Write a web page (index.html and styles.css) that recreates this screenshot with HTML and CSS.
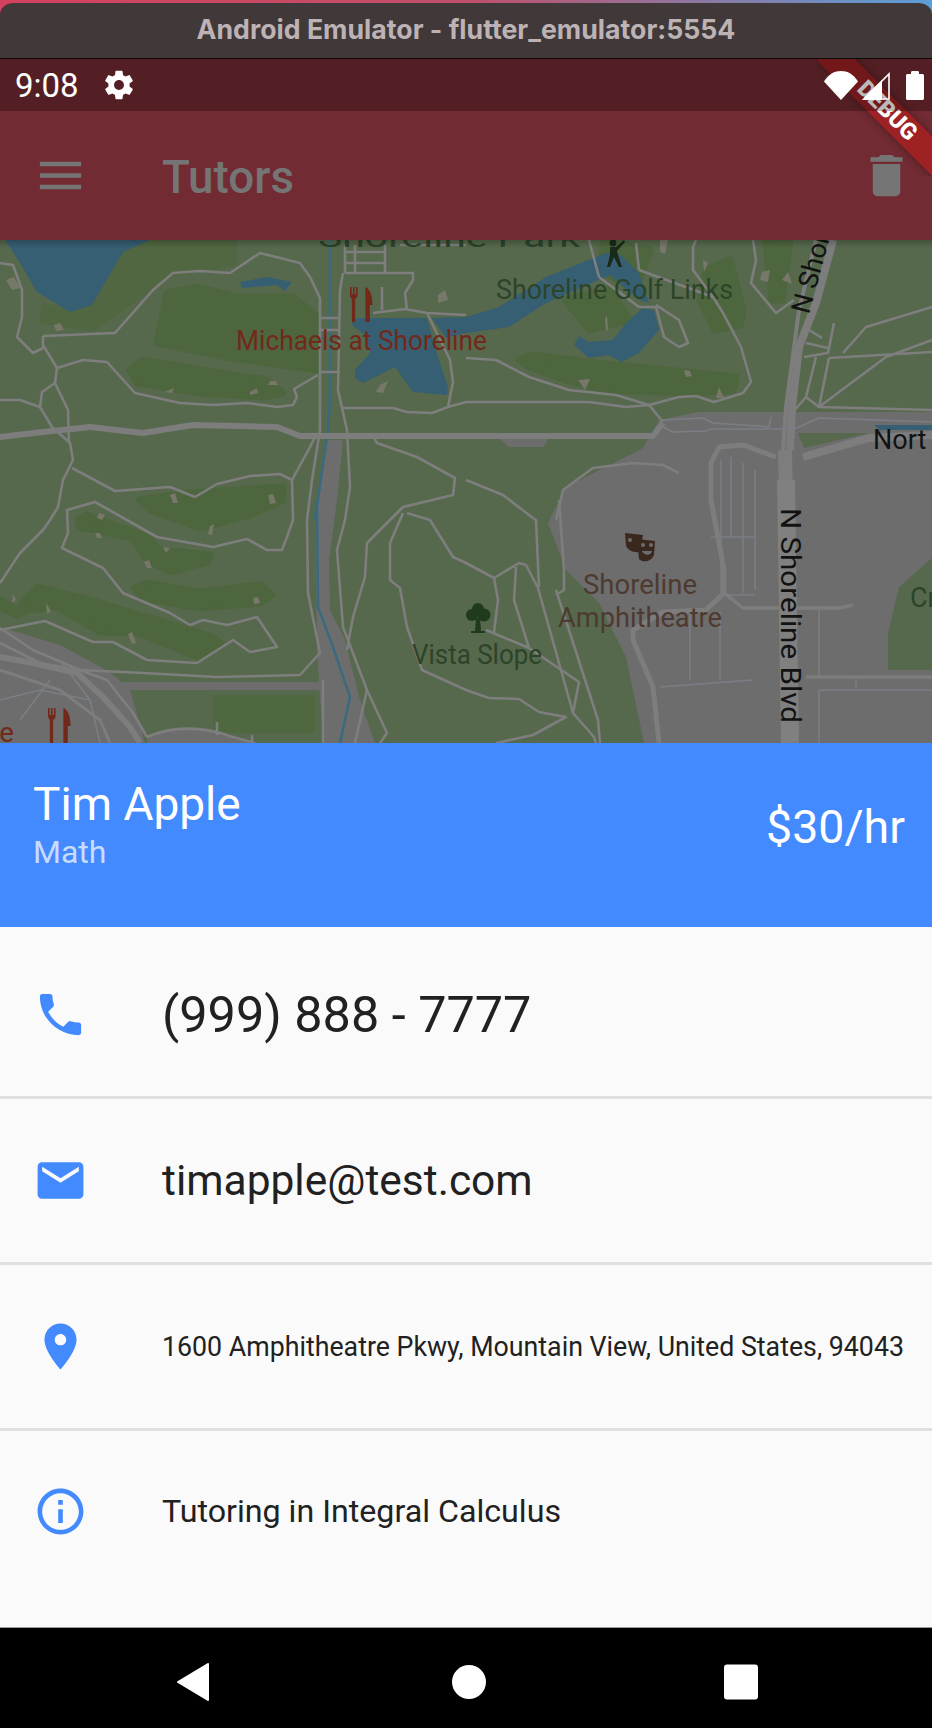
FILE: index.html

```html
<!DOCTYPE html>
<html lang="en">
<head>
  <meta charset="UTF-8" />
  <meta name="viewport" content="width=device-width, initial-scale=1.0"/>
  <title>Android Emulator - flutter_emulator:5554</title>
  <link rel="stylesheet" href="styles.css">
</head>
<body>
  <div class="window">
    <div class="titlebar">Android Emulator - flutter_emulator:5554</div>

    <div class="statusbar">
      <span class="time">9:08</span>
      <svg class="gear" viewBox="0 0 24 24"><path fill="#fff" d="M19.43 12.98c.04-.32.07-.64.07-.98s-.03-.66-.07-.98l2.11-1.65c.19-.15.24-.42.12-.64l-2-3.46c-.12-.22-.39-.3-.61-.22l-2.49 1c-.52-.4-1.08-.73-1.69-.98l-.38-2.65C14.46 2.18 14.25 2 14 2h-4c-.25 0-.46.18-.49.42l-.38 2.65c-.61.25-1.17.59-1.69.98l-2.49-1c-.23-.09-.49 0-.61.22l-2 3.46c-.13.22-.07.49.12.64l2.11 1.65c-.04.32-.07.65-.07.98s.03.66.07.98l-2.11 1.65c-.19.15-.24.42-.12.64l2 3.46c.12.22.39.3.61.22l2.49-1c.52.4 1.08.73 1.69.98l.38 2.65c.03.24.24.42.49.42h4c.25 0 .46-.18.49-.42l.38-2.65c.61-.25 1.17-.59 1.69-.98l2.49 1c.23.09.49 0 .61-.22l2-3.46c.12-.22.07-.49-.12-.64l-2.11-1.65zM12 15.5c-1.93 0-3.5-1.57-3.5-3.5s1.57-3.5 3.5-3.5 3.5 1.57 3.5 3.5-1.57 3.5-3.5 3.5z"/></svg>
      <span class="spacer"></span>
      <svg class="wifi" viewBox="0 0 34 29"><path fill="#fff" d="M0 10.500C4.500 3 10.500 0 17 0s12.500 3 17 10.500L17 29z"/></svg>
      <svg class="signal" viewBox="0 0 28 28"><path fill="none" stroke="#fff" stroke-width="1.600" d="M27 2v25H2z"/><path fill="#fff" d="M20 8v20H0z"/></svg>
      <svg class="battery" viewBox="0 0 18 30"><path fill="#fff" d="M5 2.500c0-.8.5-1.500 1.500-1.500h5c1 0 1.500.7 1.500 1.500V4h3.500c.8 0 1.500.7 1.500 1.500v23c0 .8-.7 1.500-1.500 1.500h-15C.7 30 0 29.300 0 28.500v-23C0 4.700.7 4 1.500 4H5z"/></svg>
    </div>

    <header class="appbar">
      <svg class="bar-icon" viewBox="0 0 24 24"><path fill="#757575" d="M3 18h18v-2H3v2zm0-5h18v-2H3v2zm0-7v2h18V6H3z"/></svg>
      <span class="appbar-title">Tutors</span>
      <svg class="bar-icon trash" viewBox="0 0 24 24"><path fill="#757575" d="M6 19c0 1.100.9 2 2 2h8c1.100 0 2-.9 2-2V7H6v12zM19 4h-3.500l-1-1h-5l-1 1H5v2h14V4z"/></svg>
    </header>

    <div class="map">
      <svg class="map-svg" viewBox="0 240 932 503" xmlns="http://www.w3.org/2000/svg">
        <defs>
          <g id="fork-knife">
            <path d="M0 0h1.500v7h1.200V0h1.500v7h1.200V0h1.500v8c0 2-1 3.200-2.200 3.800V35h-3V11.800C1 11.200 0 10 0 8zM14 35V0c3.500 1.500 6.500 7 6.500 18H18v17z" transform="scale(1.100 1)"/>
          </g>
        </defs>

        <rect x="0" y="240" width="932" height="503" fill="#56694c"/>

        <g class="map-soft">
          <!-- built up land -->
          <g fill="#6d6d6d">
            <path d="M659 420L699 412H932V743H644L626 657L599 603L566 570L548 523L566 487L643 448z"/>
            <path d="M0 627L60 645L110 672L130 690L145 743H0z"/>
            <path d="M327 440H343L337 500L329 560L330 610L345 640L360 700L375 743H323L317 650L316 560L318 500z"/>
            <path d="M147 737C170 725 200 725 233 737L258 743H147z"/>
            <path d="M108 682H320V690H127z"/>
            <path d="M499 438H549L543 447H509z"/>
          </g>
          <path fill="#56694c" d="M932 558L899 587L888 633V670H932z"/>
          <path fill="#56694c" d="M798 433H869L804 448z"/>

          <!-- fairways -->
          <g class="fairways" fill="#4e663e" stroke="#4e663e">
            <path class="fairway-pale" d="M43 320L45 307L70 312L92 305L123 252L150 240H233V263L170 273L93 328z"/>
            <path d="M157 343L167 293L197 287L237 297H293L317 317V370L227 357z"/>
            <path d="M130 370L143 360L200 370L267 380L283 393L263 397L200 393L137 383z"/>
            <path d="M140 500L187 493L283 487V500L250 515L200 528L150 510z"/>
            <path d="M78 520L87 515L147 537L160 550L210 555L207 562L170 572L147 560L133 538L80 527z"/>
            <path d="M135 588L147 583L200 592L260 585L272 595L260 603L200 608L143 598z"/>
            <path d="M0 600L17 610L37 587L100 603L213 637L220 643L200 658L140 633L100 632L57 607L27 610L17 615L0 607z"/>
            <path d="M519 360L533 355L586 362L666 370L736 377L733 390L693 393L606 390L566 380L529 367z"/>
            <path d="M706 270L730 260L743 310L740 325L715 330L700 300z"/>
            <path d="M766 240H790L782 300H772z"/>
            <path d="M604 240L650 250L636 290L600 270z"/>
            <path d="M565 300L610 290L630 320L590 330z"/>
          </g>
          <rect x="213" y="695" width="102" height="38" fill="#4f683f"/>

          <!-- water -->
          <g fill="#365f73">
            <path d="M5 240L20 263L37 292L70 312L92 305L123 252L150 240z"/>
            <path d="M240 282L267 277L292 282L285 291L277 285L242 288z"/>
            <path d="M352 325L353 318H427L438 357L448 387L447 395L413 392L395 367L363 383L355 378V370L370 353L365 335z"/>
            <path d="M432 318L466 317L499 307L546 277L606 253L621 255L639 273L649 303L639 300L610 275L559 297L543 305L509 327L466 333L446 338z"/>
            <path d="M579 336L574 345L589 358L609 355L621 362L639 353L659 330L654 310L643 308L626 323L613 340L589 342z"/>
            <path d="M874 425H932V430H880z"/>
          </g>
          <path fill="none" stroke="#3a6a80" stroke-width="2.500" d="M330 240V397L328 430L315 520L317 500L318 607L333 647L350 697L340 743"/>

          <!-- tan patches -->
          <g fill="#78786a">
            <path d="M6 280L14 277L20 288L12 290z"/><path d="M54 325L60 323L64 330L56 331z"/>
            <path d="M165 392L174 388L172 393z"/><path d="M250 392L257 388L258 393L250 395z"/>
            <path d="M270 381L276 381L278 385L268 385z"/><path d="M170 495L175 493L178 503L173 503z"/>
            <path d="M268 495L273 494L276 503L270 504z"/><path d="M99 513L105 515L102 520L97 518z"/>
            <path d="M95 533L100 533L102 538L97 538z"/><path d="M163 547L170 548L166 553z"/>
            <path d="M144 562L149 560L152 568L147 568z"/><path d="M210 526L214 524L212 535L208 534z"/>
            <path d="M253 598L258 597L260 603L254 604z"/><path d="M13 594L16 600L12 603z"/>
            <path d="M46 603L51 611L47 614z"/><path d="M128 634L132 632L136 643L132 644z"/>
            <path d="M380 385L388 381L383 393L376 392z"/><path d="M438 295L445 290L448 300L438 303z"/>
            <path d="M660 235L668 240L665 254L660 252z"/><path d="M703 260L708 263L704 272z"/>
            <path d="M762 272L770 270L768 282L760 280z"/><path d="M782 280L788 272L792 284z"/>
            <path d="M578 380L590 379L585 390L583 387z"/><path d="M684 370L690 371L692 376L686 377z"/>
            <path d="M716 398L719 387L724 398z"/><path d="M605 320L607 315L608 330L606 331z"/>
          </g>

          <!-- thin roads -->
          <g fill="none" stroke="#7e7e7e" stroke-width="2.600" stroke-linejoin="round">
            <path d="M43 336L115 333L153 290L173 273L200 271L230 273L260 253L300 263L310 277L320 298"/>
            <path d="M0 263L13 265L22 290V317L17 337L33 353L43 348V336"/>
            <path d="M43 345L57 368L83 360L107 362L135 393L180 403L213 405L247 403L277 407L293 405L297 397L294 389L318 375"/>
            <path d="M57 368L55 383L42 392L40 407L20 400L0 400"/>
            <path d="M40 407L52 427L70 443L73 460L63 480L58 507L50 520L43 530L20 553L0 583"/>
            <path d="M55 383L68 410L69 443"/>
            <path d="M72 468L115 491L170 487L195 497L217 484L250 476L280 474L292 480L293 520L287 537L282 550H267L247 539L213 547L157 537L95 502L67 510L68 533L62 548L103 568L123 593L170 613L190 625L203 620L227 625L257 617L277 647L250 652L233 640L197 663L147 660L113 642H93L45 621L0 630"/>
            <path d="M292 480L310 447L317 433"/>
            <path d="M0 628L33 650L80 670L143 673L217 677L300 675L320 653L308 593L307 520L312 480L320 430V298"/>
            <path d="M340 290L338 390L347 430L350 487L345 520L337 550L343 627L367 690L387 733L380 743"/>
            <path d="M367 690L355 743"/>
            <path d="M347 650L353 617L365 577L367 543L403 507L453 495L455 478L417 457L377 443L373 435"/>
            <path d="M403 513L390 543V580L400 588L407 627L422 670L466 690L489 698L519 699L539 712L566 717L533 735L496 743"/>
            <path d="M407 513L430 520L453 557L466 563L494 578L519 563L526 565L538 588L573 713L594 737L596 743"/>
            <path d="M494 578L498 600L494 632M486 630L529 648M516 567L514 600L529 648L579 682L573 713M556 590L598 720L600 743"/>
            <path d="M466 480L503 495L533 518L536 520L539 587M559 500L564 570V590L556 595"/>
            <path d="M343 273L340 290M345 252H385M345 263H385M345 273H413V280L405 293L407 310M345 245V273M355 245V273M385 245V273M382 287V310M400 245H466"/>
            <path d="M320 318H340M320 330H340M320 372H340"/>
            <path d="M373 313L405 309L427 313L466 315M427 313L450 360L453 382L448 407L432 413L407 412L393 408L343 408M448 407L466 402H589L626 407L649 405L679 397L696 396L714 402L743 393L751 382L741 347L723 313L713 297L693 270V247L696 240"/>
            <path d="M466 358L496 360L529 377L569 390L616 395L649 405L663 422"/>
            <path d="M589 240L599 277M639 270L713 297M636 243L639 270M639 307H656L664 337L679 347L688 343L679 320L656 305M599 277L639 307"/>
            <path d="M753 240L756 260L751 283L776 313L794 300"/>
            <path d="M932 307L866 327L843 353M932 340L886 357L819 407M829 358L932 352M829 358L819 407M834 323L828 353L804 357M806 343L828 348M816 357L806 397L793 412M806 397L819 407L932 410"/>
            <path d="M806 328L822 338"/>
            <path d="M556 520L563 490L593 468L633 463L663 465L679 473"/>
            <path d="M0 643L40 663L80 670L107 680L133 713L147 737"/>
            <path d="M147 737C175 725 205 727 233 737L255 743M217 722V735M252 735V743M323 680V743"/>
          </g>

          <!-- main roads -->
          <g fill="none" stroke="#7d7d7d" stroke-linejoin="round">
            <path stroke-width="6" d="M0 437L43 432L90 427L143 433L193 425L277 427L300 436H653L663 423"/>
            <path stroke-width="4" d="M816 240L799 310L786 407L783 450"/>
            <path stroke-width="8" d="M833 240L816 303L799 347L792 407L790 450"/>
            <path stroke-width="14" d="M785 450L786 500"/>
            <path stroke-width="18" stroke="#808080" d="M786 480L790 743"/>
            <path stroke-width="8" d="M803 457L869 438L932 435"/>
            <path stroke-width="5" d="M776 457L743 445L719 447L711 463V500L724 570V593L706 610L663 612L633 630V640L653 687L659 743"/>
            <path stroke-width="3.500" d="M724 593L743 608H839L853 605"/>
            <path stroke-width="3.500" d="M806 677H932"/>
            <path stroke-width="6" d="M0 657L33 663L77 673L103 697L130 727L140 743"/>
            <path stroke-width="3" d="M0 670L60 690L100 720L110 743"/>
          </g>

          <!-- service roads, bluish -->
          <g fill="none" stroke="#7a7f86" stroke-width="1.500">
            <path d="M721 460V593M731 457V537M743 463V593M755 470V590M711 537H755M721 595H755"/>
            <path d="M690 612V680M720 612V680M660 687L753 680"/>
            <path d="M819 608V677M819 690H932M819 690V743M856 677V690"/>
            <path d="M663 420L703 418L713 423L743 425L769 427L771 417M663 427L673 432L706 431L711 429H794L819 418L932 422"/>
            <path d="M0 700L40 690L90 700L60 660M20 720L50 680M90 700L100 743"/>
          </g>
        </g>

        <!-- map pictograms -->
        <use href="#fork-knife" x="350" y="287" fill="#72291a"/>
        <use href="#fork-knife" x="48" y="708" fill="#72291a"/>
        <g fill="#1a2a1a">
          <circle cx="613" cy="243" r="3.500"/>
          <path d="M610 247L616 247L618 255L622 267H619L614 257L610 267H607L610 255zM616 247L624 240L625 242L617 251z"/>
        </g>
        <g fill="#3a281f">
          <path d="M625 533L643 535L640 552C633 553 628 550 626 546z"/>
          <path d="M637 539L655 541L654 555C651 562 643 563 639 559z"/>
          <circle cx="630" cy="540" r="2" fill="#6d6d6d"/>
          <circle cx="643" cy="545" r="2" fill="#6d6d6d"/><circle cx="651" cy="545" r="2" fill="#6d6d6d"/>
          <path d="M642 551H652C651 556 644 556 642 551z" fill="#6d6d6d"/>
        </g>
        <g fill="#1f3a1c">
          <circle cx="472" cy="615" r="6"/><circle cx="484" cy="615" r="6.500"/><circle cx="478" cy="609" r="6"/>
          <path d="M476 618H480L481 631H485V633H471V631H475z"/>
        </g>

        <!-- map labels -->
        <g class="map-label">
          <text class="label-green" x="318" y="247" textLength="262" lengthAdjust="spacingAndGlyphs">Shoreline Park</text>
          <text class="label-green" x="496" y="299" textLength="237" lengthAdjust="spacingAndGlyphs">Shoreline Golf Links</text>
          <text class="label-red" x="236" y="350" textLength="251" lengthAdjust="spacingAndGlyphs">Michaels at Shoreline</text>
          <text class="label-red" x="-10" y="742" textLength="24" lengthAdjust="spacingAndGlyphs">fe</text>
          <text class="label-brown" x="583" y="594" textLength="114" lengthAdjust="spacingAndGlyphs">Shoreline</text>
          <text class="label-brown" x="558" y="627" textLength="164" lengthAdjust="spacingAndGlyphs">Amphitheatre</text>
          <text class="label-green" x="412" y="664" textLength="130" lengthAdjust="spacingAndGlyphs">Vista Slope</text>
          <text class="label-green" x="910" y="607">Cr</text>
          <text class="label-black" x="873" y="449">Nort</text>
          <text class="label-black" transform="translate(809 315) rotate(-75)">N Shor</text>
          <text class="label-black" transform="translate(781 508) rotate(90)" textLength="215" lengthAdjust="spacingAndGlyphs">N Shoreline Blvd</text>
        </g>
      </svg>
    </div>

    <section class="sheet-head">
      <div class="head-left">
        <div class="tutor-name">Tim Apple</div>
        <div class="tutor-subject">Math</div>
      </div>
      <div class="tutor-rate">$30/hr</div>
    </section>

    <section class="details">
      <div class="row first">
        <svg class="row-icon" viewBox="0 0 24 24"><path d="M6.620 10.790c1.440 2.830 3.760 5.140 6.590 6.590l2.200-2.200c.27-.27.67-.36 1.020-.24 1.120.37 2.330.57 3.570.57.550 0 1 .45 1 1V20c0 .55-.45 1-1 1-9.390 0-17-7.610-17-17 0-.55.45-1 1-1h3.500c.55 0 1 .45 1 1 0 1.250.2 2.450.57 3.570.11.350.03.74-.25 1.020l-2.200 2.200z"/></svg>
        <span class="row-text big">(999) 888 - 7777</span>
      </div>
      <div class="row">
        <svg class="row-icon" viewBox="0 0 24 24"><path d="M20 4H4c-1.100 0-1.990.9-1.990 2L2 18c0 1.100.9 2 2 2h16c1.100 0 2-.9 2-2V6c0-1.100-.9-2-2-2zm0 4l-8 5-8-5V6l8 5 8-5v2z"/></svg>
        <span class="row-text mid">timapple@test.com</span>
      </div>
      <div class="row">
        <svg class="row-icon" viewBox="0 0 24 24"><path d="M12 2C8.130 2 5 5.130 5 9c0 5.250 7 13 7 13s7-7.750 7-13c0-3.870-3.130-7-7-7zm0 9.500c-1.380 0-2.500-1.120-2.500-2.500s1.120-2.500 2.500-2.500 2.500 1.120 2.500 2.500-1.120 2.500-2.500 2.500z"/></svg>
        <span class="row-text small">1600 Amphitheatre Pkwy, Mountain View, United States, 94043</span>
      </div>
      <div class="row last">
        <svg class="row-icon" viewBox="0 0 24 24"><path d="M11 7h2v2h-2zm0 4h2v6h-2zm1-9C6.480 2 2 6.480 2 12s4.480 10 10 10 10-4.480 10-10S17.520 2 12 2zm0 18c-4.410 0-8-3.590-8-8s3.590-8 8-8 8 3.590 8 8-3.590 8-8 8z"/></svg>
        <span class="row-text normal">Tutoring in Integral Calculus</span>
      </div>
    </section>

    <nav class="navbar">
      <svg class="nav-icon" viewBox="0 0 34 38"><path fill="#fff" stroke="#fff" stroke-width="2" stroke-linejoin="round" d="M2 19L32 1V37z"/></svg>
      <svg class="nav-icon" viewBox="0 0 34 38"><ellipse cx="17" cy="19" rx="17" ry="17" fill="#fff"/></svg>
      <svg class="nav-icon" viewBox="0 0 34 38"><rect y="1.500" width="34" height="35" rx="3" fill="#fff"/></svg>
    </nav>

    <div class="debug-ribbon"><span>DEBUG</span></div>
  </div>
</body>
</html>
```

FILE: styles.css

```css
* { box-sizing: border-box; }
html, body { margin: 0; padding: 0; }
body { width: 932px; height: 1728px; overflow: hidden; font-family: Roboto, sans-serif; background: #fafafa; }

.window { position: relative; width: 932px; height: 1728px; overflow: hidden; display: flex; flex-direction: column; background: linear-gradient(90deg, #d3415f, #c0506a 50%, #5a9fd8); }

.titlebar { height: 59px; flex: none; display: flex; align-items: center; justify-content: center; padding-bottom: 3px; border-top: 3px solid transparent; border-bottom: 1.500px solid #0c0a0a; border-radius: 14px 14px 0 0; background: #403839 padding-box; color: #bdb3b4; font-family: Inter, sans-serif; font-size: 26.700px; font-weight: 700; }

/* status bar tint lies over the ribbon, the icons over the tint */
.statusbar { position: relative; height: 52px; flex: none; display: flex; align-items: center; padding: 0 8px 0 15px; background: #722b32; color: #fff; }
.statusbar::before { content: ""; position: absolute; z-index: 2; inset: 0; background: rgba(0, 0, 0, .27); }
.statusbar > * { position: relative; z-index: 3; }
.time { font-size: 33px; line-height: 1; width: 87px; }
.gear { width: 34px; height: 34px; }
.spacer { flex: 1; }
.wifi { width: 34px; height: 29px; margin-right: 4px; margin-top: 1px; }
.signal { width: 28px; height: 28px; margin-right: 16px; margin-top: 1px; }
.battery { width: 18px; height: 30px; }

.appbar { height: 129px; flex: none; display: flex; align-items: center; padding: 0 33px; background: #722b32; }
.bar-icon { width: 55px; height: 55px; flex: none; }
.appbar-title { margin-left: 74px; padding-top: 4px; flex: 1; color: #757575; font-size: 45.800px; font-weight: 500; line-height: 1; }
.trash { margin-right: -15px; }

.map { height: 503px; flex: none; overflow: hidden; position: relative; }
.map::before { content: ""; position: absolute; top: 0; left: 0; right: 0; height: 8px; background: linear-gradient(rgba(0, 0, 0, .22), rgba(0, 0, 0, 0)); }
.map-svg { display: block; width: 932px; height: 503px; }
.map-soft { filter: blur(.7px); }
.fairways { stroke-width: 7px; stroke-linejoin: round; }
.fairway-pale { fill: #516741; stroke: #516741; }
.map-label { font-family: Roboto, sans-serif; font-size: 27px; }
.label-green { fill: #2c4429; }
.label-red { fill: #72291a; }
.label-brown { fill: #4d3a30; }
.label-black { fill: #121212; }

.sheet-head { height: 184px; flex: none; display: flex; align-items: center; justify-content: space-between; padding: 0 27px 16px 33px; background: #448aff; color: #fff; }
.head-left { margin-bottom: 10px; }
.tutor-name { font-size: 46px; line-height: 60px; }
.tutor-subject { font-size: 32px; line-height: 36px; color: #c7dcff; }
.tutor-rate { font-size: 46.500px; }

.details { flex: 1; display: flex; flex-direction: column; background: #fafafa; }
.row { height: 166px; flex: none; display: flex; align-items: center; padding: 0 27px 0 33px; border-bottom: 3px solid #e0e0e0; }
.row.first { height: 172px; padding-top: 6px; }
.row.last { height: 160px; border-bottom: none; }
.row-icon { width: 55px; height: 55px; flex: none; fill: #448aff; }
.row-text { margin-left: 74px; color: #212121; white-space: nowrap; }
.row-text.big { font-size: 50.400px; }
.row-text.mid { font-size: 42.500px; }
.row-text.small { font-size: 26.750px; }
.row-text.normal { font-size: 32.200px; }

.navbar { height: 101px; flex: none; display: grid; grid-template-columns: 276px 276px 268px; padding: 8px 0 0 55px; align-items: center; justify-items: center; background: #000; border-top: 1px solid #999; }
.nav-icon { width: 34px; height: 38px; }

.debug-ribbon { position: absolute; z-index: 1; top: 59px; right: 0; width: 117px; height: 117px; overflow: hidden; }
.debug-ribbon span { position: absolute; top: 38px; left: -13px; width: 170px; height: 28px; display: block; text-align: center; transform: rotate(45deg); background: rgba(183, 28, 28, .63); box-shadow: 0 0 8px rgba(0, 0, 0, .35); color: #fff; font-size: 23px; font-weight: 900; line-height: 28px; }
```
